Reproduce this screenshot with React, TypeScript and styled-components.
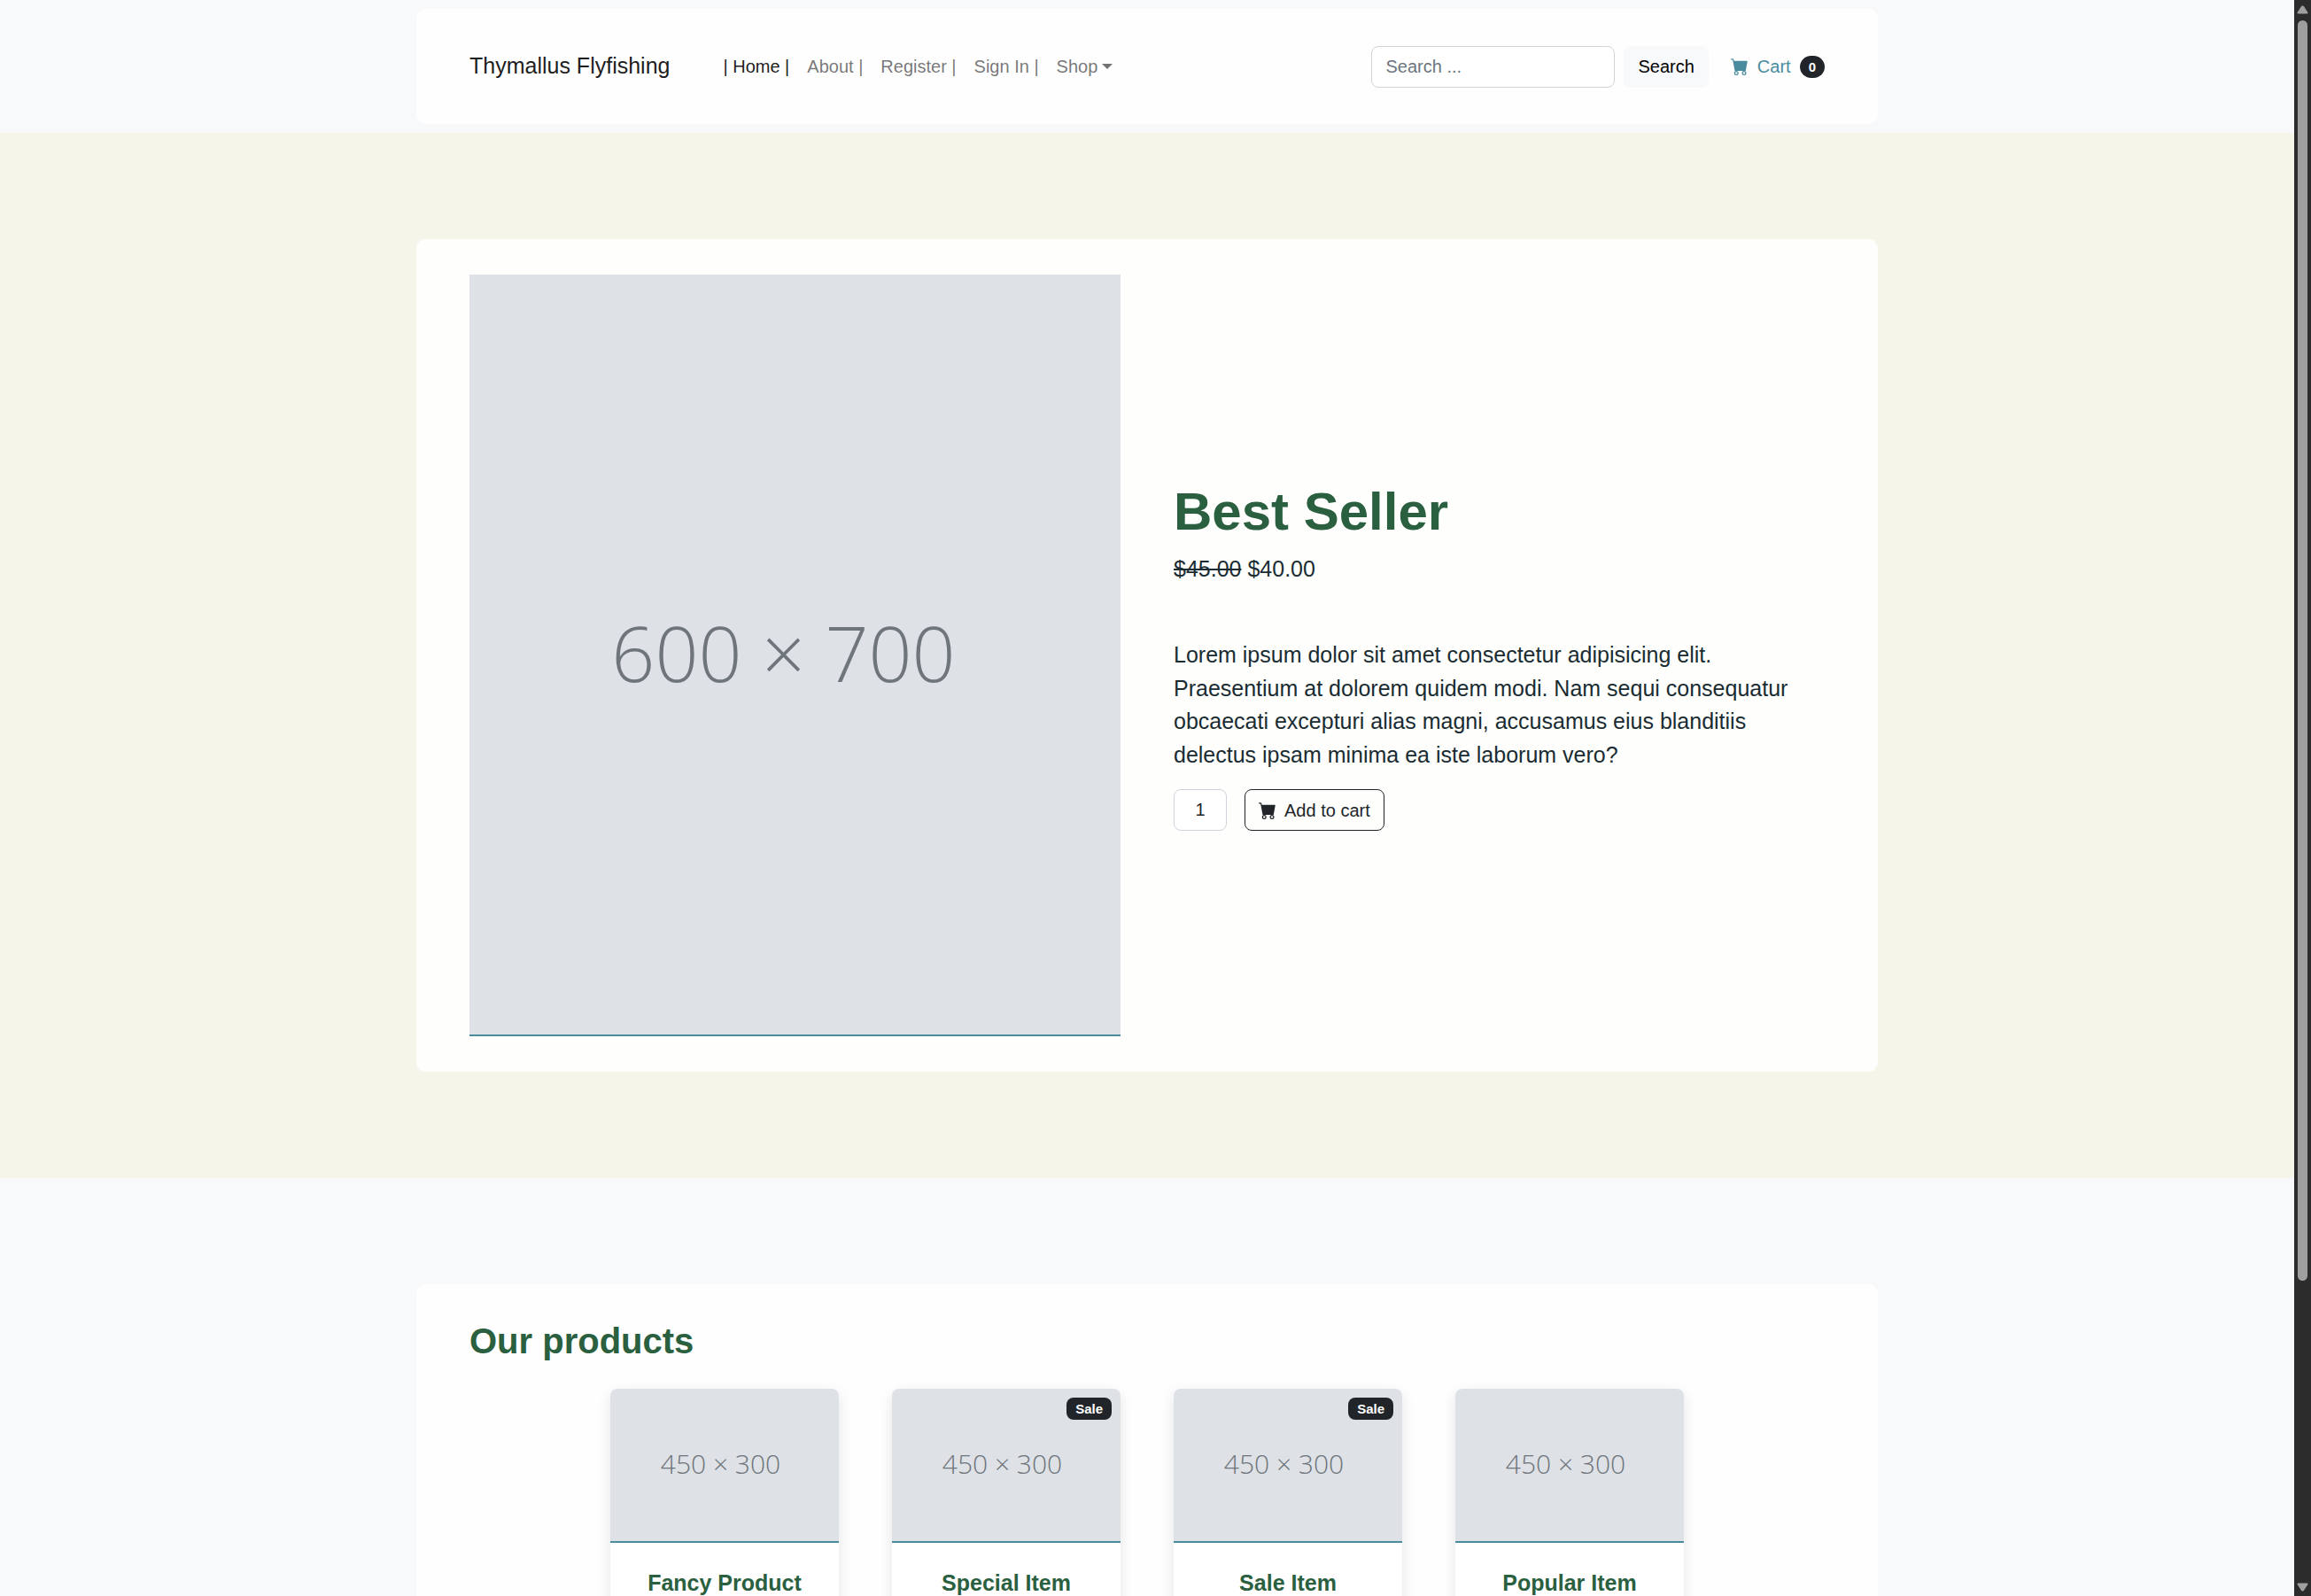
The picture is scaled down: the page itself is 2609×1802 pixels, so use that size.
import React from "react";
import styled, { createGlobalStyle } from "styled-components";
import { BsCartFill } from "react-icons/bs";

const color = {
  mist: "#f8f9fb",
  sand: "#f5f5e9",
  panel: "#fefefe",
  forest: "#2a5f40",
  teal: "#4a8c9e",
  ink: "#1a2c32",
  dark: "#212529",
  line: "#ced4da",
  placeholder: "#dee1e6",
};

const GlobalStyle = createGlobalStyle`
  *, *::before, *::after { box-sizing: border-box; }
  body {
    margin: 0;
    font: 20px/1.5 "Liberation Sans", Arial, sans-serif;
    color: ${color.ink};
    background: ${color.mist};
  }
  h1, h2, h3, p { margin: 0; }
  a { color: inherit; text-decoration: none; }
  button, input { font: inherit; color: inherit; }
`;

const Window = styled.div`
  display: grid;
  grid-template-columns: minmax(0, 1fr) 19px;
  height: 100vh;
  overflow: hidden;
`;

const Page = styled.div`
  min-width: 0;
  overflow: hidden;
`;

const Band = styled.div<{ $tone: string; $space: number }>`
  padding: ${(p) => p.$space}px 0;
  background: ${(p) => p.$tone};
`;

const Panel = styled.div<{ $tone?: string }>`
  width: 100%;
  max-width: 1650px;
  margin: 0 auto;
  padding: 40px 60px;
  border-radius: 10px;
  background: ${(p) => p.$tone ?? color.panel};
`;

const NavBar = styled.nav`
  display: flex;
  align-items: center;
`;

const Brand = styled.a`
  margin-right: 50px;
  font-size: 25px;
  color: rgba(0, 0, 0, 0.9);
`;

const NavList = styled.ul`
  display: flex;
  margin: 0 auto 0 0;
  padding: 0;
  list-style: none;
`;

const NavLink = styled.a<{ $active?: boolean }>`
  display: block;
  padding: 10px;
  color: ${(p) => (p.$active ? "rgba(0, 0, 0, 0.9)" : "rgba(0, 0, 0, 0.55)")};
`;

const NavToggle = styled.button`
  display: flex;
  align-items: center;
  gap: 5px;
  padding: 10px;
  border: 0;
  background: none;
  color: rgba(0, 0, 0, 0.55);

  &::after {
    content: "";
    border-top: 6px solid;
    border-right: 6px solid transparent;
    border-left: 6px solid transparent;
  }
`;

const SearchForm = styled.form`
  display: flex;
  gap: 10px;
  margin-right: 25px;
`;

const TextField = styled.input<{ $width: number; $centered?: boolean }>`
  width: ${(p) => p.$width}px;
  height: 47px;
  padding: 0 15px;
  border: 1px solid ${color.line};
  border-radius: 8px;
  background: #fff;
  color: ${color.dark};
  text-align: ${(p) => (p.$centered ? "center" : "left")};

  &::placeholder { color: #6c757d; opacity: 1; }
`;

const Button = styled.button<{ $outline?: boolean }>`
  display: flex;
  align-items: center;
  gap: 9px;
  height: 47px;
  padding: 0 15px;
  border: 1px solid ${(p) => (p.$outline ? color.dark : color.mist)};
  border-radius: 8px;
  background: ${(p) => (p.$outline ? "transparent" : color.mist)};
  color: ${(p) => (p.$outline ? color.dark : "#000")};
`;

const CartLink = styled.a`
  display: flex;
  align-items: center;
  gap: 10px;
  color: ${color.teal};
`;

const Badge = styled.span<{ $pill?: boolean }>`
  padding: 5px 10px;
  border-radius: ${(p) => (p.$pill ? 16 : 8)}px;
  background: ${color.dark};
  color: #fff;
  font-size: 15px;
  font-weight: 700;
  line-height: 15px;
`;

const HeroGrid = styled.div`
  display: grid;
  grid-template-columns: 1fr 1fr;
  gap: 60px;
  align-items: center;
`;

const Figure = styled.div`
  border-bottom: 2px solid ${color.teal};
`;

const Placeholder = styled.div<{ $ratio: string; $size: number }>`
  display: flex;
  align-items: center;
  justify-content: center;
  aspect-ratio: ${(p) => p.$ratio};
  padding: 0 ${(p) => Math.round(p.$size * 0.3)}px ${(p) => Math.round(p.$size * 0.04)}px 0;
  background: ${color.placeholder};
  color: #6e757b;
  font: 300 ${(p) => p.$size}px/1 "Open Sans", "Noto Sans", sans-serif;
`;

const HeroTitle = styled.h1`
  margin-bottom: 10px;
  color: ${color.forest};
  font-size: 60px;
  line-height: 1.2;
`;

const Price = styled.div`
  margin-bottom: 60px;
  font-size: 25px;

  s { text-decoration-thickness: 2px; }
`;

const Lead = styled.p`
  margin-bottom: 20px;
  font-size: 25px;
`;

const BuyRow = styled.div`
  display: flex;
  gap: 20px;
`;

const SectionTitle = styled.h2`
  margin-bottom: 30px;
  color: ${color.forest};
  font-size: 40px;
  line-height: 1.2;
`;

const ProductRow = styled.div`
  display: flex;
  justify-content: center;
  gap: 60px;
`;

const Card = styled.article`
  position: relative;
  flex: 0 0 calc((100% + 60px) / 5 - 60px);
  overflow: hidden;
  border-radius: 8px;
  background: #fff;
  box-shadow: 0 5px 15px rgba(0, 0, 0, 0.1);
`;

const SaleTag = styled(Badge)`
  position: absolute;
  top: 10px;
  right: 10px;
`;

const CardBody = styled.div`
  padding: 30px 10px;
  text-align: center;
`;

const CardTitle = styled.h3`
  color: ${color.forest};
  font-size: 25px;
  line-height: 1.2;
`;

const Rail = styled.div`
  display: flex;
  flex-direction: column;
  align-items: center;
  padding: 6px 0 5px;
  background: #2c2c2c;
`;

const RailTrack = styled.div`
  flex: 1;
  width: 11px;
  margin: 7px 0;
`;

const RailThumb = styled.div`
  height: 81%;
  border-radius: 6px;
  background: #9f9f9f;
`;

const Arrow = ({ down }: { down?: boolean }) => (
  <svg width="13" height="10" viewBox="0 0 13 10" aria-hidden="true">
    <path
      d={down ? "M1.5 1.5h10L7 8.5H6z" : "M1.5 8.5h10L7 1.5H6z"}
      fill="#9f9f9f"
      stroke="#9f9f9f"
      strokeWidth="2"
      strokeLinejoin="round"
    />
  </svg>
);

const links = ["| Home |", "About |", "Register |", "Sign In |"];

const products = [
  { name: "Fancy Product", sale: false },
  { name: "Special Item", sale: true },
  { name: "Sale Item", sale: true },
  { name: "Popular Item", sale: false },
];

export default function App() {
  return (
    <Window>
      <GlobalStyle />
      <Page>
        <Band as="header" $tone={color.mist} $space={10}>
          <Panel>
            <NavBar>
              <Brand href="#">Thymallus Flyfishing</Brand>
              <NavList>
                {links.map((label, i) => (
                  <li key={label}>
                    <NavLink href="#" $active={i === 0}>{label}</NavLink>
                  </li>
                ))}
                <li>
                  <NavToggle type="button">Shop</NavToggle>
                </li>
              </NavList>
              <SearchForm>
                <TextField type="search" placeholder="Search ..." aria-label="Search" $width={275} />
                <Button type="button">Search</Button>
              </SearchForm>
              <CartLink href="#">
                <BsCartFill size={20} />
                Cart
                <Badge $pill>0</Badge>
              </CartLink>
            </NavBar>
          </Panel>
        </Band>

        <Band as="section" $tone={color.sand} $space={120}>
          <Panel $tone="#fefffd">
            <HeroGrid>
              <Figure>
                <Placeholder $ratio="6 / 7" $size={86}>600 × 700</Placeholder>
              </Figure>
              <div>
                <HeroTitle>Best Seller</HeroTitle>
                <Price>
                  <s>$45.00</s> <span>$40.00</span>
                </Price>
                <Lead>
                  Lorem ipsum dolor sit amet consectetur adipisicing elit. Praesentium at dolorem
                  quidem modi. Nam sequi consequatur obcaecati excepturi alias magni, accusamus
                  eius blanditiis delectus ipsam minima ea iste laborum vero?
                </Lead>
                <BuyRow>
                  <TextField defaultValue="1" aria-label="Quantity" $width={60} $centered />
                  <Button type="button" $outline>
                    <BsCartFill size={20} />
                    Add to cart
                  </Button>
                </BuyRow>
              </div>
            </HeroGrid>
          </Panel>
        </Band>

        <Band as="section" $tone={color.mist} $space={120}>
          <Panel>
            <SectionTitle>Our products</SectionTitle>
            <ProductRow>
              {products.map((product) => (
                <Card key={product.name}>
                  {product.sale && <SaleTag>Sale</SaleTag>}
                  <Figure>
                    <Placeholder $ratio="3 / 2" $size={30}>450 × 300</Placeholder>
                  </Figure>
                  <CardBody>
                    <CardTitle>{product.name}</CardTitle>
                  </CardBody>
                </Card>
              ))}
            </ProductRow>
          </Panel>
        </Band>
      </Page>
      <Rail aria-hidden="true">
        <Arrow />
        <RailTrack>
          <RailThumb />
        </RailTrack>
        <Arrow down />
      </Rail>
    </Window>
  );
}
